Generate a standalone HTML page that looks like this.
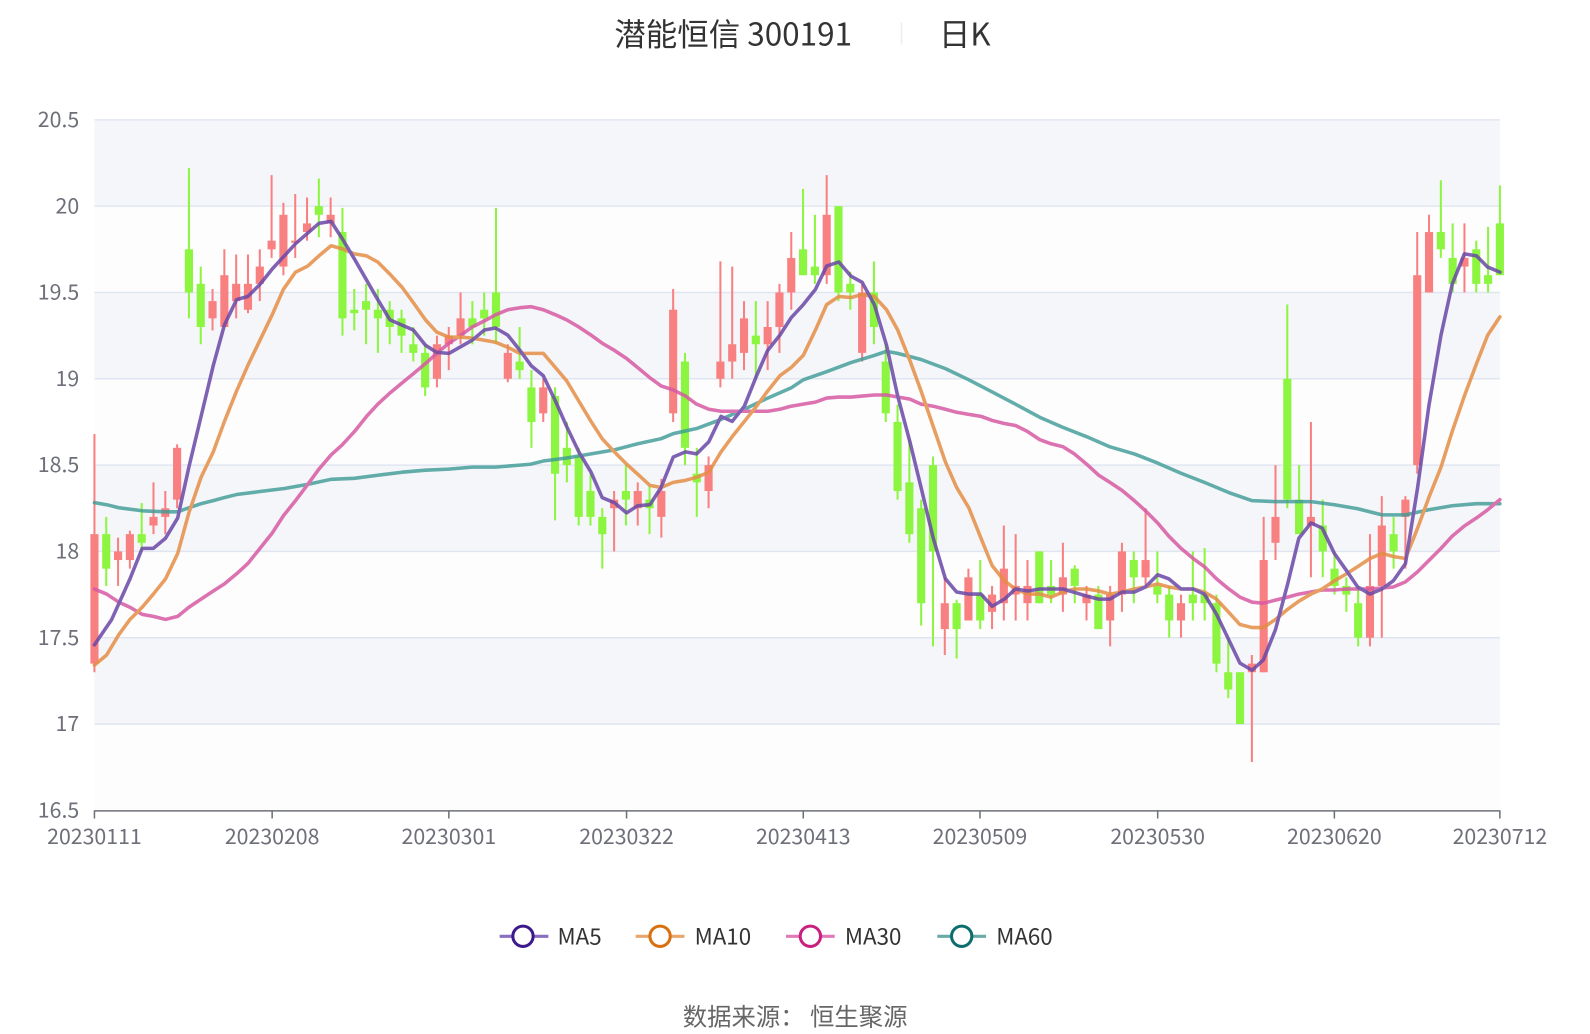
<!DOCTYPE html>
<html><head><meta charset="utf-8"><style>
html,body{margin:0;padding:0;background:#fff;width:1590px;height:1034px;overflow:hidden}
svg{display:block}
text{font-family:"Noto Sans CJK SC","Liberation Sans",sans-serif}
</style></head><body>
<svg id="s" width="1590" height="1034" viewBox="0 0 1590 1034" xmlns="http://www.w3.org/2000/svg">
<g transform="scale(1.0155)">
<text x="722" y="45" font-size="31" fill="#333" text-anchor="middle">潜能恒信 300191</text>
<rect x="887" y="22" width="1.5" height="22" fill="#eee"/>
<text x="950" y="45" font-size="31" fill="#333" text-anchor="middle">日K</text>
<rect x="93" y="118" width="1384" height="85" fill="#f5f6fa"/>
<rect x="93" y="203" width="1384" height="85" fill="#fdfdfe"/>
<rect x="93" y="288" width="1384" height="85" fill="#f5f6fa"/>
<rect x="93" y="373" width="1384" height="85" fill="#fdfdfe"/>
<rect x="93" y="458" width="1384" height="85" fill="#f5f6fa"/>
<rect x="93" y="543" width="1384" height="85" fill="#fdfdfe"/>
<rect x="93" y="628" width="1384" height="85" fill="#f5f6fa"/>
<rect x="93" y="713" width="1384" height="85" fill="#fdfdfe"/>
<g stroke="#e0e6f1" stroke-width="1.5">
<line x1="93" x2="1477" y1="118" y2="118"/><line x1="93" x2="1477" y1="203" y2="203"/><line x1="93" x2="1477" y1="288" y2="288"/><line x1="93" x2="1477" y1="373" y2="373"/><line x1="93" x2="1477" y1="458" y2="458"/><line x1="93" x2="1477" y1="543" y2="543"/><line x1="93" x2="1477" y1="628" y2="628"/><line x1="93" x2="1477" y1="713" y2="713"/>
</g>
<g font-size="21" fill="#6e7079" text-anchor="end">
<text x="78" y="125">20.5</text><text x="78" y="210">20</text><text x="78" y="295">19.5</text><text x="78" y="380">19</text><text x="78" y="465">18.5</text><text x="78" y="550">18</text><text x="78" y="635">17.5</text><text x="78" y="720">17</text><text x="78" y="805">16.5</text>
</g>
<g id="candles"></g>
<g fill="none" stroke-width="3.5" stroke-linejoin="round" stroke-linecap="round" opacity="0.85">
<polyline stroke="#3d9a96" stroke-opacity="0.95" points="93,495 105,497 117,500 140,503 163,504 175,504 186,500 198,496 210,493 221,490 233,487 256,484 280,481 303,477 326,472 349,471 372,468 396,465 419,463 442,462 465,460 488,460 512,458 523,457 535,454 558,451 582,447 605,443 628,437 651,432 663,427 686,422 710,413 733,403 756,392 779,382 791,374 814,366 838,357 861,350 873,346 884,348 907,354 931,363 954,374 977,386 1000,398 1024,411 1047,421 1070,430 1093,440 1117,447 1140,456 1163,466 1186,475 1210,485 1233,493 1256,494 1291,494 1314,497 1337,501 1361,507 1384,507 1407,502 1430,498 1454,496 1477,496"/>
<polyline stroke="#d75aa3" points="93,580 105,585 117,593 128,598 140,605 151,607 163,610 175,607 186,598 198,590 210,582 221,575 233,565 244,555 256,540 268,525 279,508 291,493 303,477 314,462 326,448 337,438 349,425 361,410 372,398 384,387 396,377 407,368 419,358 430,348 442,338 454,330 465,322 477,316 488,310 500,305 512,303 523,302 535,305 547,310 558,315 570,322 582,330 593,338 605,345 617,353 628,362 640,372 651,380 663,384 675,390 686,398 698,403 710,405 721,405 733,405 745,405 756,405 768,403 779,400 791,398 803,396 814,392 826,391 838,391 849,390 861,389 873,389 884,391 896,393 907,398 919,400 931,403 942,406 954,408 966,410 977,414 989,417 1000,419 1012,425 1024,433 1035,437 1047,440 1058,447 1070,457 1082,468 1093,475 1105,483 1117,493 1128,503 1140,515 1151,528 1163,540 1175,550 1186,558 1198,570 1210,580 1221,588 1233,593 1244,594 1256,591 1268,588 1279,585 1291,583 1302,581 1314,581 1326,580 1337,580 1349,580 1361,579 1372,578 1384,573 1396,563 1407,552 1419,540 1430,528 1442,518 1454,510 1465,502 1477,492"/>
<polyline stroke="#e58e45" points="93,655 105,645 117,625 128,610 140,598 151,585 163,570 175,545 186,505 198,470 210,445 221,415 233,385 244,360 256,335 268,310 279,285 291,268 303,262 314,252 326,242 337,245 349,250 361,252 372,258 384,270 396,283 407,298 419,315 430,327 442,332 454,332 465,333 477,335 488,337 500,342 512,348 523,348 535,348 547,362 558,375 570,395 582,415 593,432 605,445 617,457 628,467 640,478 651,480 663,475 675,473 686,470 698,465 710,445 721,430 733,415 745,400 756,385 768,370 779,362 791,350 803,325 814,300 826,292 838,293 849,290 861,292 873,305 884,325 896,355 907,385 919,420 931,455 942,480 954,500 966,530 977,557 989,572 1000,580 1012,585 1024,585 1035,588 1047,583 1058,580 1070,580 1082,582 1093,585 1105,583 1117,580 1128,578 1140,575 1151,578 1163,580 1175,580 1186,583 1198,590 1210,603 1221,615 1233,618 1244,618 1256,610 1268,600 1279,592 1291,585 1302,580 1314,572 1326,565 1337,558 1349,550 1361,545 1372,548 1384,550 1396,520 1407,490 1419,460 1430,425 1442,390 1454,358 1465,330 1477,312"/>
<polyline stroke="#6a48a6" points="93,635 110,610 128,570 140,540 151,540 163,530 175,510 186,460 198,410 210,360 221,320 233,295 244,292 256,280 268,265 291,240 314,220 326,218 337,235 349,255 372,295 384,315 407,325 419,340 430,347 442,348 465,335 477,325 488,323 500,330 512,345 523,360 535,370 547,395 558,420 570,445 582,465 593,490 605,495 617,505 628,498 640,497 651,480 663,450 675,445 686,447 698,435 710,410 721,415 733,400 745,370 756,345 768,330 779,313 791,300 803,285 814,262 826,258 838,272 849,278 861,300 873,340 884,390 896,435 907,480 919,530 931,570 942,583 954,585 966,585 977,597 989,590 1000,580 1012,582 1024,580 1047,580 1070,587 1082,590 1093,590 1105,583 1117,583 1128,578 1140,566 1151,570 1163,580 1175,580 1186,585 1198,605 1210,630 1221,653 1233,660 1244,650 1256,620 1268,575 1279,530 1291,515 1302,520 1314,545 1326,562 1337,578 1349,585 1361,580 1372,572 1384,555 1396,480 1407,400 1419,330 1430,280 1442,250 1454,252 1465,263 1477,268"/>
</g>
<g stroke="#6e7079" stroke-width="1.5" fill="none">
<line x1="93" x2="1477" y1="798.5" y2="798.5"/>
<line x1="93" x2="93" y1="798" y2="806"/><line x1="268" x2="268" y1="798" y2="806"/><line x1="442" x2="442" y1="798" y2="806"/><line x1="617" x2="617" y1="798" y2="806"/><line x1="791" x2="791" y1="798" y2="806"/><line x1="965" x2="965" y1="798" y2="806"/><line x1="1140" x2="1140" y1="798" y2="806"/><line x1="1314" x2="1314" y1="798" y2="806"/><line x1="1477" x2="1477" y1="798" y2="806"/>
</g>
<g font-size="21" fill="#6e7079" text-anchor="middle">
<text x="93" y="831">20230111</text><text x="268" y="831">20230208</text><text x="442" y="831">20230301</text><text x="617" y="831">20230322</text><text x="791" y="831">20230413</text><text x="965" y="831">20230509</text><text x="1140" y="831">20230530</text><text x="1314" y="831">20230620</text><text x="1477" y="831">20230712</text>
</g>
<g stroke-width="3" fill="#fff">
<line x1="492" x2="540" y1="922" y2="922" stroke="#8a6fc0"/><circle cx="515" cy="922" r="10" stroke="#3d1a8c"/>
<line x1="626" x2="674" y1="922" y2="922" stroke="#e9a66c"/><circle cx="650" cy="922" r="10" stroke="#d9700f"/>
<line x1="774" x2="822" y1="922" y2="922" stroke="#e07ab7"/><circle cx="798" cy="922" r="10" stroke="#c8207f"/>
<line x1="923" x2="971" y1="922" y2="922" stroke="#69aaa8"/><circle cx="947" cy="922" r="10" stroke="#0d6d6d"/>
</g>
<g font-size="22" fill="#333">
<text x="549" y="930">MA5</text><text x="684" y="930">MA10</text><text x="832" y="930">MA30</text><text x="981" y="930">MA60</text>
</g>
<text x="783" y="1010" font-size="24" fill="#666" text-anchor="middle">数据来源：  恒生聚源</text>
</g>
</svg>
<script>
var d=[[17.35,18.1,18.68,17.3],[18.1,17.9,18.2,17.8],[17.95,18.0,18.08,17.8],[17.95,18.1,18.12,17.9],[18.1,18.05,18.28,18.0],[18.15,18.2,18.4,18.1],[18.2,18.25,18.35,18.1],[18.3,18.6,18.62,18.25],
[19.75,19.5,20.22,19.35],[19.55,19.3,19.65,19.2],[19.35,19.45,19.52,19.28],[19.3,19.6,19.75,19.3],[19.45,19.55,19.72,19.35],[19.4,19.55,19.72,19.38],[19.55,19.65,19.75,19.45],[19.75,19.8,20.18,19.7],[19.65,19.95,20.02,19.6],[19.8,19.8,20.07,19.7],[19.85,19.9,20.05,19.8],[20.0,19.95,20.16,19.82],[19.9,19.95,20.05,19.82],[19.85,19.35,19.99,19.25],[19.4,19.38,19.52,19.28],[19.45,19.4,19.55,19.2],[19.4,19.35,19.52,19.15],[19.4,19.3,19.45,19.2],[19.35,19.25,19.4,19.15],[19.2,19.15,19.3,19.1],[19.15,18.95,19.2,18.9],[19.0,19.2,19.25,18.95],[19.2,19.25,19.3,19.05],[19.25,19.35,19.5,19.2],[19.35,19.3,19.45,19.2],[19.4,19.35,19.5,19.25],[19.5,19.3,19.99,19.2],[19.0,19.15,19.2,18.98],[19.1,19.05,19.3,19.0],[18.95,18.75,19.05,18.6],[18.8,18.95,19.0,18.75],[18.9,18.45,18.95,18.18],[18.6,18.5,18.75,18.4],[18.55,18.2,18.6,18.15],[18.35,18.2,18.45,18.15],[18.2,18.1,18.25,17.9],[18.25,18.3,18.35,18.0],[18.35,18.3,18.5,18.15],[18.25,18.35,18.4,18.15],[18.3,18.25,18.38,18.1],[18.2,18.35,18.42,18.08],[18.8,19.4,19.52,18.75],[19.1,18.6,19.15,18.5],[18.45,18.4,18.6,18.2],[18.35,18.5,18.55,18.25],[19.0,19.1,19.68,18.95],[19.1,19.2,19.65,19.0],[19.15,19.35,19.45,19.05],[19.25,19.2,19.45,19.0],[19.2,19.3,19.45,19.05],[19.3,19.5,19.55,19.15],[19.5,19.7,19.85,19.4],[19.75,19.6,20.1,19.6],[19.65,19.6,19.95,19.55],[19.6,19.95,20.18,19.55],[20.0,19.5,20.0,19.45],[19.55,19.5,19.62,19.4],[19.15,19.5,19.55,19.1],[19.5,19.3,19.68,19.2],[19.1,18.8,19.2,18.75],[18.75,18.35,18.85,18.3],[18.4,18.1,18.65,18.05],[18.25,17.7,18.3,17.57],[18.5,18.0,18.55,17.45],[17.55,17.7,17.85,17.4],[17.7,17.55,17.72,17.38],[17.6,17.85,17.9,17.6],[17.75,17.6,17.95,17.55],[17.65,17.75,17.8,17.55],[17.7,17.9,18.15,17.6],[17.75,17.8,18.1,17.6],[17.7,17.8,17.95,17.6],[18.0,17.7,18.0,17.7],[17.8,17.75,17.95,17.7],[17.75,17.85,18.05,17.65],[17.9,17.8,17.92,17.7],[17.7,17.75,17.8,17.6],[17.75,17.55,17.8,17.55],[17.6,17.75,17.8,17.45],[17.75,18.0,18.05,17.65],[17.95,17.85,18.0,17.7],[17.85,17.95,18.25,17.8],[17.8,17.75,18.0,17.7],[17.75,17.6,17.8,17.5],[17.6,17.7,17.75,17.5],[17.75,17.7,18.0,17.6],[17.75,17.7,18.02,17.6],[17.7,17.35,17.75,17.3],[17.3,17.2,17.5,17.15],[17.3,17.0,17.3,17.0],[17.3,17.35,17.4,16.78],[17.3,17.95,18.2,17.3],[18.05,18.2,18.5,17.95],[19.0,18.3,19.43,18.25],[18.3,18.1,18.5,18.1],[18.15,18.2,18.75,17.85],[18.15,18.0,18.3,17.85],[17.9,17.8,18.0,17.75],[17.8,17.75,17.85,17.65],[17.7,17.5,17.8,17.45],[17.5,17.8,18.1,17.45],[17.8,18.15,18.32,17.5],[18.1,18.0,18.2,17.9],[18.2,18.3,18.32,17.9],[18.5,19.6,19.85,18.45],[19.5,19.85,19.95,19.5],[19.85,19.75,20.15,19.7],[19.7,19.55,19.9,19.5],[19.65,19.7,19.9,19.5],[19.75,19.55,19.8,19.5],[19.6,19.55,19.88,19.5],[19.9,19.6,20.12,19.6]];
var g=document.getElementById('candles'),h='';
function Y(p){return 118+(20.5-p)*170;}
for(var i=0;i<d.length;i++){var c=d[i],x=93+i*1384/119,up=c[1]>=c[0],col=up?'#f98080':'#8cf53f';
var t=Y(Math.max(c[0],c[1])),b=Y(Math.min(c[0],c[1]));if(b-t<2)b=t+2;
h+='<line x1="'+x+'" x2="'+x+'" y1="'+Y(c[2])+'" y2="'+Y(c[3])+'" stroke="'+col+'" stroke-width="2"/>';
h+='<rect x="'+(x-4)+'" y="'+t+'" width="8" height="'+(b-t)+'" fill="'+col+'"/>';}
g.innerHTML=h;
</script>
</body></html>
